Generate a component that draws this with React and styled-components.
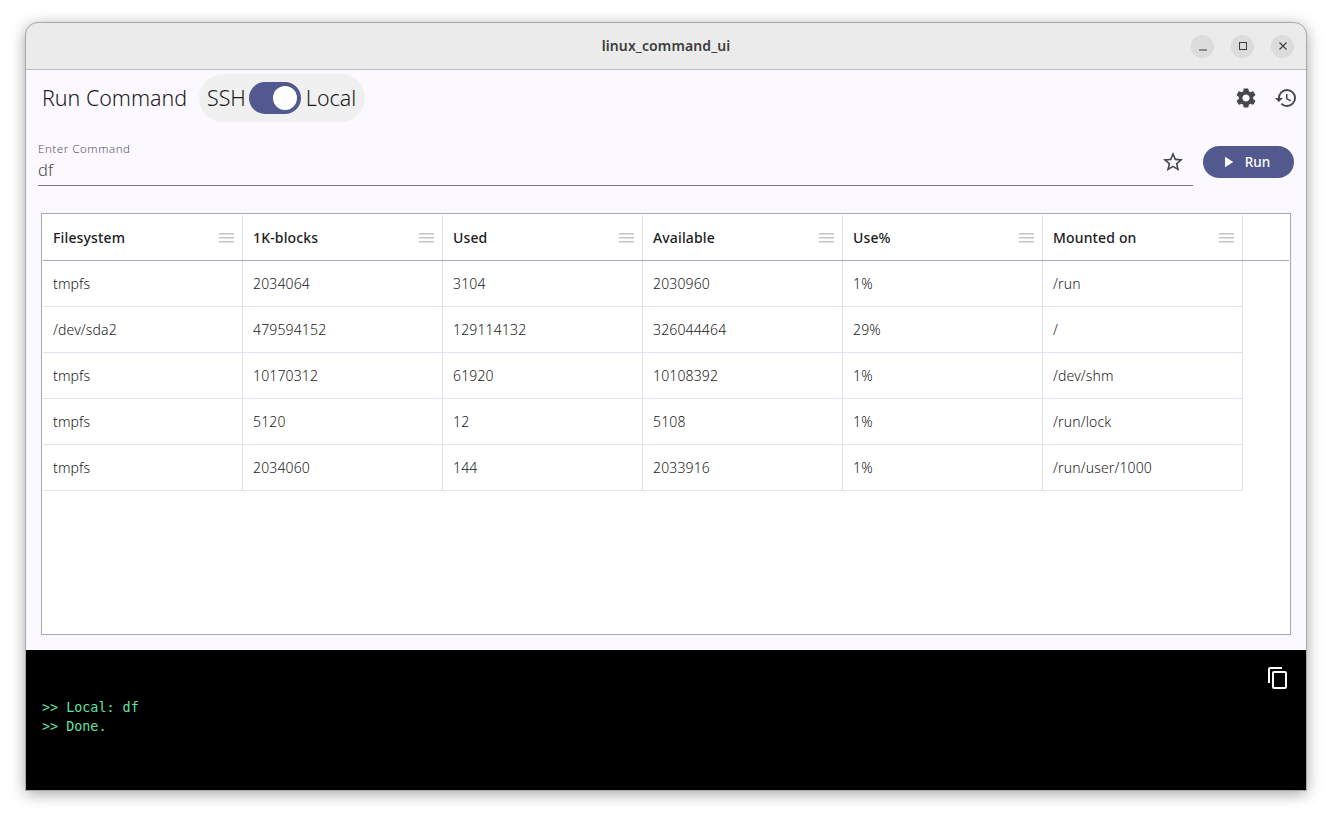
import React from 'react'
import styled, { createGlobalStyle } from 'styled-components'
import { MdSettings, MdHistory, MdStarBorder, MdPlayArrow, MdContentCopy } from 'react-icons/md'

const UI_FONT = '"Noto Sans", "Open Sans", sans-serif'

const GlobalStyle = createGlobalStyle`
  html, body {
    margin: 0;
    padding: 0;
    background: #fff;
    height: 100%;
    overflow: hidden;
  }
  body {
    font-family: ${UI_FONT};
  }
`

const Page = styled.div`
  padding: 23px 26px 0;
`

const Window = styled.div`
  width: 1280px;
  height: 767px;
  display: flex;
  flex-direction: column;
  box-sizing: border-box;
  border-radius: 12px 12px 0 0;
  outline: 1px solid #a8a8a8;
  background: #fbf8ff;
  box-shadow: 0 3px 16px rgba(0, 0, 0, 0.4);
`

const TitleBar = styled.div`
  height: 46px;
  flex: none;
  display: grid;
  grid-template-columns: 1fr auto 1fr;
  align-items: center;
  background: #ebebeb;
  border-bottom: 1px solid #bcbcbc;
  border-radius: 12px 12px 0 0;
  box-sizing: content-box;
`

const WindowTitle = styled.div`
  grid-column: 2;
  font-size: 14px;
  font-weight: 600;
  letter-spacing: 0.12px;
  color: #3d3d3d;
  padding-bottom: 2px;
`

const WindowButtons = styled.div`
  grid-column: 3;
  justify-self: end;
  display: flex;
  gap: 17px;
  padding-right: 12px;
`

const WindowButton = styled.div`
  width: 23px;
  height: 23px;
  border-radius: 50%;
  background: #dcdcdc;
  display: flex;
  align-items: center;
  justify-content: center;
`

const Toolbar = styled.div`
  height: 56px;
  flex: none;
  display: flex;
  align-items: center;
  padding: 0 8px 0 16px;
`

const Heading = styled.div`
  font-size: 21.4px;
  font-weight: 300;
  color: #1b1b21;
  width: 157px;
  padding-bottom: 2px;
`

const ModeSwitch = styled.div`
  height: 48px;
  width: 166px;
  box-sizing: border-box;
  border-radius: 24px;
  background: #f0f0f0;
  display: flex;
  align-items: center;
  padding: 0 8px;
  font-size: 21.4px;
  font-weight: 300;
  color: #1b1b21;
`

const ModeLabel = styled.span`
  padding-bottom: 2px;
`

const Track = styled.div`
  width: 52px;
  height: 32px;
  flex: none;
  margin: 0 5px 0 3px;
  border-radius: 16px;
  background: #52598f;
  display: flex;
  align-items: center;
  justify-content: flex-end;
  padding-right: 4px;
  box-sizing: border-box;
`

const Thumb = styled.div`
  width: 24px;
  height: 24px;
  border-radius: 50%;
  background: #fff;
`

const Spacer = styled.div`
  flex: 1;
`

const ToolIcons = styled.div`
  display: flex;
  align-items: center;
  gap: 16px;
  color: #46464f;
  font-size: 24px;
  line-height: 0;
`

const CommandRow = styled.div`
  height: 60px;
  flex: none;
  display: flex;
  align-items: flex-end;
  padding: 0 12px 0 12px;
`

const Field = styled.div`
  flex: 1;
  height: 48px;
  box-sizing: border-box;
  border-bottom: 1px solid #777680;
  display: flex;
  justify-content: space-between;
  align-items: center;
`

const FieldText = styled.div`
  display: flex;
  flex-direction: column;
`

const FieldLabel = styled.span`
  font-size: 11.5px;
  line-height: 16px;
  font-weight: 300;
  letter-spacing: 0.55px;
  color: #55555c;
  margin-bottom: 1px;
`

const FieldValue = styled.span`
  font-size: 16.5px;
  line-height: 24px;
  font-weight: 300;
  color: #4a4a4f;
`

const StarIcon = styled(MdStarBorder)`
  font-size: 24px;
  color: #46464f;
  margin-right: 8px;
`

const RunButton = styled.button`
  width: 91px;
  height: 32px;
  margin: 0 0 8px 10px;
  border: none;
  border-radius: 16px;
  background: #52598f;
  color: #fff;
  display: flex;
  align-items: center;
  justify-content: center;
  gap: 8px;
  font-family: inherit;
  font-size: 13.5px;
  font-weight: 500;
  padding: 0 8px 0 0;
`

const Grid = styled.div`
  margin: 27px 15px 15px;
  flex: 1;
  background: #fff;
  border: 1px solid #a6a7b3;
  padding: 1px 1px 0;
  box-sizing: border-box;
`

const HeaderRow = styled.div`
  display: flex;
  height: 46px;
  box-sizing: border-box;
  border-bottom: 1px solid #a6a7b3;
`

const HeaderCell = styled.div`
  width: 200px;
  box-sizing: border-box;
  display: flex;
  align-items: center;
  justify-content: space-between;
  padding: 0 8px 0 10px;
  border-right: 1px solid #e1e2ec;
  font-size: 14px;
  font-weight: 500;
  letter-spacing: 0.15px;
  color: #1b1b21;

  svg {
    width: 15px;
  }
`

const BodyRow = styled.div`
  display: flex;
  width: 1200px;
  height: 46px;
  box-sizing: border-box;
  border-bottom: 1px solid #e1e2ec;
`

const Cell = styled.div`
  width: 200px;
  box-sizing: border-box;
  display: flex;
  align-items: center;
  padding-left: 10px;
  border-right: 1px solid #e1e2ec;
  font-size: 14px;
  font-weight: 300;
  letter-spacing: 0.15px;
  color: #1b1b21;
`

const Console = styled.div`
  height: 140px;
  flex: none;
  background: #000;
  display: flex;
  justify-content: space-between;
  padding: 48px 16px 0;
  box-sizing: border-box;
`

const ConsoleLines = styled.div`
  font-family: "DejaVu Sans Mono", monospace;
  font-size: 13.4px;
  line-height: 19px;
  color: #62e0a6;
  white-space: pre;
`

const CopyIcon = styled(MdContentCopy)`
  font-size: 24px;
  color: #fff;
  margin-top: -32px;
`

const columns = ['Filesystem', '1K-blocks', 'Used', 'Available', 'Use%', 'Mounted on']

const rows = [
  ['tmpfs', '2034064', '3104', '2030960', '1%', '/run'],
  ['/dev/sda2', '479594152', '129114132', '326044464', '29%', '/'],
  ['tmpfs', '10170312', '61920', '10108392', '1%', '/dev/shm'],
  ['tmpfs', '5120', '12', '5108', '1%', '/run/lock'],
  ['tmpfs', '2034060', '144', '2033916', '1%', '/run/user/1000'],
]

const MenuGlyph = () => (
  <svg width="16" height="10" viewBox="0 0 16 10" preserveAspectRatio="none" fill="#c4c4c4">
    <rect x="0" y="0" width="16" height="1.5" />
    <rect x="0" y="4" width="16" height="1.5" />
    <rect x="0" y="8" width="16" height="1.5" />
  </svg>
)

export default function App() {
  return (
    <Page>
      <GlobalStyle />
      <Window>
        <TitleBar>
          <WindowTitle>linux_command_ui</WindowTitle>
          <WindowButtons>
            <WindowButton>
              <svg width="10" height="10" viewBox="0 0 10 10">
                <path d="M1 9h8" stroke="#3d3d3d" strokeWidth="1" />
              </svg>
            </WindowButton>
            <WindowButton>
              <svg width="10" height="10" viewBox="0 0 10 10" fill="none">
                <rect x="1.5" y="1.5" width="7" height="7" stroke="#3d3d3d" strokeWidth="1" />
              </svg>
            </WindowButton>
            <WindowButton>
              <svg width="10" height="10" viewBox="0 0 10 10">
                <path d="M1.5 1.5l7 7M8.5 1.5l-7 7" stroke="#3d3d3d" strokeWidth="1.1" />
              </svg>
            </WindowButton>
          </WindowButtons>
        </TitleBar>

        <Toolbar>
          <Heading>Run Command</Heading>
          <ModeSwitch>
            <ModeLabel>SSH</ModeLabel>
            <Track>
              <Thumb />
            </Track>
            <ModeLabel>Local</ModeLabel>
          </ModeSwitch>
          <Spacer />
          <ToolIcons>
            <MdSettings />
            <MdHistory />
          </ToolIcons>
        </Toolbar>

        <CommandRow>
          <Field>
            <FieldText>
              <FieldLabel>Enter Command</FieldLabel>
              <FieldValue>df</FieldValue>
            </FieldText>
            <StarIcon />
          </Field>
          <RunButton>
            <MdPlayArrow size={18} />
            Run
          </RunButton>
        </CommandRow>

        <Grid>
          <HeaderRow>
            {columns.map((name) => (
              <HeaderCell key={name}>
                {name}
                <MenuGlyph />
              </HeaderCell>
            ))}
          </HeaderRow>
          {rows.map((row, i) => (
            <BodyRow key={i}>
              {row.map((value, j) => (
                <Cell key={j}>{value}</Cell>
              ))}
            </BodyRow>
          ))}
        </Grid>

        <Console>
          <ConsoleLines>{'>> Local: df\n>> Done.'}</ConsoleLines>
          <CopyIcon />
        </Console>
      </Window>
    </Page>
  )
}
